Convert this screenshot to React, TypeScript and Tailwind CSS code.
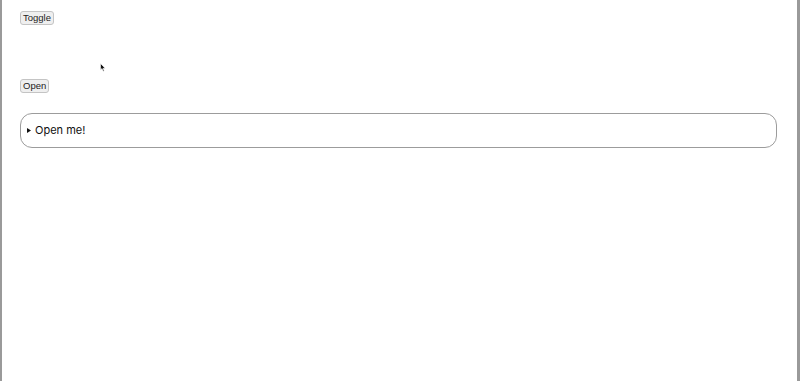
import { useState } from "react";

function Cursor() {
  return (
    <svg
      className="absolute left-[98px] top-[63px]"
      width="6"
      height="9"
      viewBox="0 0 6 9"
    >
      <path d="M0.5 0.5 L0.5 7 L2 5.6 L3.2 8.3 L4.2 7.9 L3.1 5.3 L5.2 5.2 Z" fill="#111" stroke="#fff" strokeWidth="0.6" />
    </svg>
  );
}

export default function App() {
  const [open, setOpen] = useState(false);
  const [shown, setShown] = useState(true);

  const btn =
    "h-[14px] px-[2px] text-[9.5px] leading-none text-[#222] bg-[#efefef] border border-[#c4c4c4] rounded-[3px] font-['Liberation_Sans',Arial,sans-serif]";

  return (
    <div className="relative w-[800px] h-[381px] bg-white border-l-2 border-r-[3px] border-l-[#9a9a9a] border-r-[#9a9a9a] overflow-hidden">
      <Cursor />
      <div className="flex flex-col items-start pl-[18px] pr-[20px] pt-[11px]">
        <button className={btn} onClick={() => setShown(!shown)}>
          Toggle
        </button>

        <button className={`${btn} mt-[54px]`} onClick={() => setOpen(!open)}>
          Open
        </button>

        {/* Details box */}
        <div className="mt-[20px] w-full h-[35px] border border-[#9c9c9c] rounded-[12px] flex items-center pl-[6px]">
          <div className="flex items-center gap-[4px] font-['Inter','Noto_Sans',sans-serif] text-[11px] text-[#111]">
            <svg width="4" height="5" viewBox="0 0 4 5">
              <path d="M0 0 L4 2.5 L0 5 Z" fill="#111" />
            </svg>
            <span>Open me!</span>
          </div>
        </div>
      </div>
    </div>
  );
}
